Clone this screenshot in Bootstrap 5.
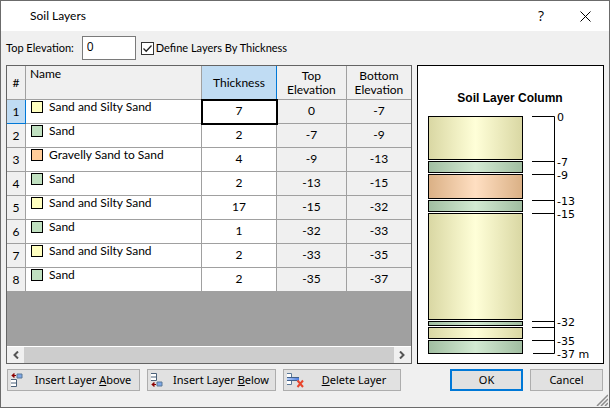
<!DOCTYPE html>
<html lang="en">
<head>
<meta charset="utf-8">
<meta name="viewport" content="width=device-width, initial-scale=1">
<title>Soil Layers</title>
<link href="https://cdn.jsdelivr.net/npm/bootstrap@5.3.0/dist/css/bootstrap.min.css" rel="stylesheet">
<style>
body{font-family:Lato,"Noto Sans",sans-serif;font-size:11px;line-height:14px;color:#000;background:#f0f0f0}
.dialog-frame{border:1px solid #6b6b6b;background:#f0f0f0}
.title-bar{height:30px;padding:0 16px 0 29px;background:#fff}
.title-bar h1{font-size:12px;line-height:16px;font-weight:400}
.title-tool{border:0;background:none;padding:0;width:16px;height:16px;line-height:16px;font-family:"Open Sans",sans-serif;font-size:14px}
.options-bar{height:34px;padding:0 5px}
.elev-input{width:54px;height:24px;border:1px solid #7a7a7a;border-radius:0;padding:0 4px 4px;font-family:"Open Sans",sans-serif;font-size:12px;line-height:16px;margin-left:8px;color:#000}
.tick-box{appearance:none;width:13px;height:13px;border:1px solid #333;background:#fff;margin:0 2px 0 5px}
.tick-box:checked{background:#fff url("data:image/svg+xml,%3Csvg xmlns='http://www.w3.org/2000/svg' viewBox='0 0 11 11'%3E%3Cpath d='M1.5 5.5l2.7 2.7 5.3-5.7' fill='none' stroke='%23222' stroke-width='1.3'/%3E%3C/svg%3E") center/11px}
.main-row{padding:0 5px;gap:5px}
.grid-frame{border:1px solid #646464;background:#a0a0a0}
.layer-grid{border-collapse:separate;border-spacing:0;table-layout:fixed;width:100%;font-size:12px}
.layer-grid th,.layer-grid td{border:0 solid #a0a0a0;border-width:0 1px 1px 0;height:24px;padding:0;text-align:center;vertical-align:middle;font-weight:400;background:#f0f0f0}
.layer-grid td{padding-bottom:2px}
.layer-grid thead th{height:34px}
.layer-grid thead th.name-head{text-align:left;vertical-align:top;padding:1px 4px}
.layer-grid tr>:last-child{border-right:0}
.layer-grid .editable{background:#fff}
.layer-grid td.name-cell{text-align:left;vertical-align:top;padding:1px 5px 0;line-height:12px}
.layer-grid .picked{background:#c0dcf3;border-color:#0078d7}
.layer-grid thead .picked{border-bottom-color:#a0a0a0}
.layer-grid .current{outline:2px solid #000;outline-offset:-1px}
.swatch{width:12px;height:12px;border:1px solid #000;margin-right:6px}
.clay{background:#ffffc0}.sandy{background:#c0e0c0}.gravel{background:#ffcc99}
.scroll-strip{height:17px;background:#f0f0f0;border-top:1px solid #fff}
.scroll-strip button{border:0;background:none;padding:0;width:17px;height:16px;line-height:0}
.scroll-thumb{background:#cdcdcd}
.chart-frame{border:1px solid #000;background:#fff;width:187px}
.chart-frame text{font-family:"DejaVu Sans",sans-serif;font-size:11px}
.chart-frame .chart-title{font-family:"Liberation Sans",Arial,sans-serif;font-size:12px;font-weight:700}
.button-row{padding:5px 6px 16px}
.btn-set,.btn-pair{gap:7px}
.dlg-btn{height:22px;border:1px solid #adadad;border-radius:0;background:#e1e1e1;padding:0;font-family:"Noto Sans",sans-serif;font-size:11px;line-height:14px;color:#000}
.dlg-btn svg{margin-left:3px}
.dlg-btn span{padding-left:4px}
.w-above{width:133px}.w-below{width:129px}.w-delete{width:118px}.w-std{width:73px}
.dlg-btn.default-btn{border:2px solid #0078d7}
.size-grip{right:1px;bottom:1px}
</style>
<script src="https://cdn.jsdelivr.net/npm/bootstrap@5.3.0/dist/js/bootstrap.bundle.min.js"></script>
</head>
<body>
<main class="dialog-frame d-flex flex-column min-vh-100 position-relative">
  <header class="title-bar d-flex align-items-center">
    <h1 class="m-0 me-auto">Soil Layers</h1>
    <button type="button" class="title-tool me-4" aria-label="Help">?</button>
    <button type="button" class="title-tool ms-1 d-flex align-items-center justify-content-center" aria-label="Close"><svg width="11" height="11" viewBox="0 0 11 11"><path d="M.5.5l10 10M10.500.5l-10 10" stroke="#000" fill="none"/></svg></button>
  </header>
  <form class="d-flex flex-column flex-grow-1">
    <div class="options-bar d-flex align-items-center">
      <label for="topElev">Top Elevation:</label>
      <input id="topElev" type="text" class="elev-input" value="0">
      <input id="byThick" type="checkbox" class="tick-box" checked>
      <label for="byThick">Define Layers By Thickness</label>
    </div>
    <div class="main-row d-flex flex-grow-1">
      <div class="grid-frame d-flex flex-column flex-grow-1">
        <table class="layer-grid">
          <colgroup><col style="width:19px"><col><col style="width:75px"><col style="width:70px"><col style="width:64px"></colgroup>
          <thead><tr><th>#</th><th class="name-head">Name</th><th class="picked">Thickness</th><th>Top<br>Elevation</th><th>Bottom<br>Elevation</th></tr></thead>
          <tbody>
            <tr><th class="picked">1</th><td class="editable name-cell"><div class="d-flex"><span class="swatch clay"></span>Sand and Silty Sand</div></td><td class="editable current">7</td><td>0</td><td>-7</td></tr>
            <tr><th>2</th><td class="editable name-cell"><div class="d-flex"><span class="swatch sandy"></span>Sand</div></td><td class="editable">2</td><td>-7</td><td>-9</td></tr>
            <tr><th>3</th><td class="editable name-cell"><div class="d-flex"><span class="swatch gravel"></span>Gravelly Sand to Sand</div></td><td class="editable">4</td><td>-9</td><td>-13</td></tr>
            <tr><th>4</th><td class="editable name-cell"><div class="d-flex"><span class="swatch sandy"></span>Sand</div></td><td class="editable">2</td><td>-13</td><td>-15</td></tr>
            <tr><th>5</th><td class="editable name-cell"><div class="d-flex"><span class="swatch clay"></span>Sand and Silty Sand</div></td><td class="editable">17</td><td>-15</td><td>-32</td></tr>
            <tr><th>6</th><td class="editable name-cell"><div class="d-flex"><span class="swatch sandy"></span>Sand</div></td><td class="editable">1</td><td>-32</td><td>-33</td></tr>
            <tr><th>7</th><td class="editable name-cell"><div class="d-flex"><span class="swatch clay"></span>Sand and Silty Sand</div></td><td class="editable">2</td><td>-33</td><td>-35</td></tr>
            <tr><th>8</th><td class="editable name-cell"><div class="d-flex"><span class="swatch sandy"></span>Sand</div></td><td class="editable">2</td><td>-35</td><td>-37</td></tr>
          </tbody>
        </table>
        <div class="scroll-strip d-flex mt-auto">
          <button type="button" aria-label="Scroll left"><svg width="8" height="8" viewBox="0 0 8 8"><path d="M6 .5L2.500 4 6 7.500" fill="none" stroke="#555" stroke-width="2"/></svg></button>
          <div class="scroll-thumb flex-grow-1"></div>
          <button type="button" aria-label="Scroll right"><svg width="8" height="8" viewBox="0 0 8 8"><path d="M2 .5L5.500 4 2 7.500" fill="none" stroke="#555" stroke-width="2"/></svg></button>
        </div>
      </div>
      <div class="chart-frame">
        <svg class="d-block" width="185" height="296" viewBox="0 0 185 296" role="img" aria-label="Soil Layer Column">
          <defs>
            <linearGradient id="gClay"><stop offset="0" stop-color="#d9d7a3"/><stop offset=".5" stop-color="#ffffd8"/><stop offset="1" stop-color="#d9d7a3"/></linearGradient>
            <linearGradient id="gSand"><stop offset="0" stop-color="#a0bda0"/><stop offset=".5" stop-color="#d3ead3"/><stop offset="1" stop-color="#a0bda0"/></linearGradient>
            <linearGradient id="gGravel"><stop offset="0" stop-color="#dab085"/><stop offset=".5" stop-color="#ffdfc2"/><stop offset="1" stop-color="#dab085"/></linearGradient>
          </defs>
          <text class="chart-title" x="92" y="36" text-anchor="middle">Soil Layer Column</text>
          <g stroke="#000">
            <rect x="10.500" y="50.500" width="94" height="43" fill="url(#gClay)"/>
            <rect x="10.500" y="95.500" width="94" height="11" fill="url(#gSand)"/>
            <rect x="10.500" y="108.500" width="94" height="24" fill="url(#gGravel)"/>
            <rect x="10.500" y="134.500" width="94" height="11" fill="url(#gSand)"/>
            <rect x="10.500" y="147.500" width="94" height="106" fill="url(#gClay)"/>
            <rect x="10.500" y="255.500" width="94" height="4" fill="url(#gSand)"/>
            <rect x="10.500" y="261.500" width="94" height="11" fill="url(#gClay)"/>
            <rect x="10.500" y="274.500" width="94" height="13" fill="url(#gSand)"/>
            <path fill="none" d="M114 50.500h22.500v237H115M114 95.500h22M114 108.500h22M114 134.500h22M114 147.500h22M114 255.500h22M114 261.500h22M114 274.500h22"/>
          </g>
          <text x="139" y="55">0</text>
          <text x="139" y="100">-7</text>
          <text x="139" y="113">-9</text>
          <text x="139" y="139">-13</text>
          <text x="139" y="152">-15</text>
          <text x="139" y="260">-32</text>
          <text x="139" y="279">-35</text>
          <text x="139" y="292">-37 m</text>
        </svg>
      </div>
    </div>
    <div class="button-row d-flex">
      <div class="btn-set d-flex">
      <button type="button" class="dlg-btn w-above d-flex align-items-center">
        <svg width="12" height="16" viewBox="0 0 12 16"><path d="M6 2h5v4H6z" fill="#7da7e8" stroke="#5b7896"/><path d="M0 7.500h5.500v7H0M0 11h5.500" fill="#fff" stroke="#4a6078"/><path d="M5 3.500H1M3 1.500L1 3.500l2 2z" stroke="#8b0000" fill="#8b0000"/></svg>
        <span class="flex-grow-1">Insert Layer <u>A</u>bove</span></button>
      <button type="button" class="dlg-btn w-below d-flex align-items-center">
        <svg width="12" height="16" viewBox="0 0 12 16"><path d="M6 10h5v4H6z" fill="#7da7e8" stroke="#5b7896"/><path d="M0 1.500h5.500v7H0M0 5h5.500" fill="#fff" stroke="#4a6078"/><path d="M5 12.500H1M3 10.500l-2 2 2 2z" stroke="#8b0000" fill="#8b0000"/></svg>
        <span class="flex-grow-1">Insert Layer <u>B</u>elow</span></button>
      <button type="button" class="dlg-btn w-delete d-flex align-items-center">
        <svg width="17" height="16" viewBox="0 0 17 16"><defs><linearGradient id="gBar"><stop offset="0" stop-color="#b8d0f8"/><stop offset="1" stop-color="#4a7be0"/></linearGradient></defs><path d="M0 1.500h4.500v4H0M0 12.500h4.500v-4H0" fill="#fff" stroke="#5b7896"/><path d="M0 5h12v4H0z" fill="url(#gBar)"/><path d="M0 5.500h12M0 8.500h10" stroke="#42618a"/><path d="M10.500 8.500l5.500 6.500M16 8.500L10.500 15" stroke="#e8452c" stroke-width="2"/></svg>
        <span class="flex-grow-1"><u>D</u>elete Layer</span></button>
      </div>
      <div class="btn-pair d-flex ms-auto">
        <button type="submit" class="dlg-btn default-btn w-std">OK</button>
        <button type="button" class="dlg-btn w-std">Cancel</button>
      </div>
    </div>
  </form>
  <svg class="size-grip position-absolute" width="12" height="12" viewBox="0 0 12 12" aria-hidden="true"><path d="M1 12L12 1M5 12l7-7M9 12l3-3" stroke="#8c8c8c" stroke-width="1.500"/></svg>
</main>
</body>
</html>
